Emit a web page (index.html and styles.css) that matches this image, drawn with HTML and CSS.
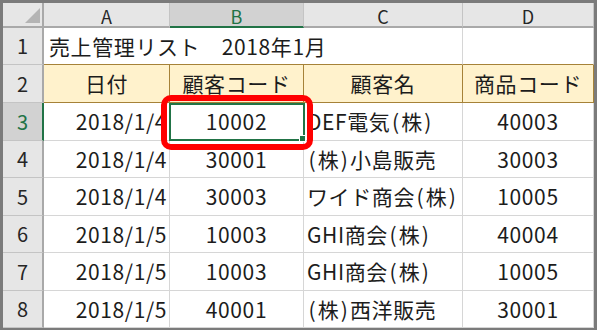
FILE: index.html
```html
<!DOCTYPE html>
<html lang="ja">
<head>
<meta charset="utf-8">
<link rel="stylesheet" href="styles.css">
</head>
<body>
<div class="frame">
  <div class="sheet">
    <div class="hd corner"><span class="tri"></span></div>
    <div class="hd col">A</div>
    <div class="hd col sel">B</div>
    <div class="hd col">C</div>
    <div class="hd col">D</div>

    <div class="rh">1</div>
    <div class="c title">売上管理リスト　2018年1月</div>
    <div class="c r1"></div>

    <div class="rh">2</div>
    <div class="c th">日付</div>
    <div class="c th">顧客コード</div>
    <div class="c th">顧客名</div>
    <div class="c th">商品コード</div>

    <div class="rh rsel">3</div>
    <div class="c date">2018/1/4</div>
    <div class="c num active">10002<span class="selbox"><span class="handle"></span></span><span class="mark"></span></div>
    <div class="c name">DEF電気<span class="p">(</span>株<span class="p">)</span></div>
    <div class="c num">40003</div>

    <div class="rh">4</div>
    <div class="c date">2018/1/4</div>
    <div class="c num">30001</div>
    <div class="c name"><span class="p">(</span>株<span class="p">)</span>小島販売</div>
    <div class="c num">30003</div>

    <div class="rh">5</div>
    <div class="c date">2018/1/4</div>
    <div class="c num">30003</div>
    <div class="c name">ワイド商会<span class="p">(</span>株<span class="p">)</span></div>
    <div class="c num">10005</div>

    <div class="rh">6</div>
    <div class="c date">2018/1/5</div>
    <div class="c num">10003</div>
    <div class="c name">GHI商会<span class="p">(</span>株<span class="p">)</span></div>
    <div class="c num">40004</div>

    <div class="rh">7</div>
    <div class="c date">2018/1/5</div>
    <div class="c num">10003</div>
    <div class="c name">GHI商会<span class="p">(</span>株<span class="p">)</span></div>
    <div class="c num">10005</div>

    <div class="rh">8</div>
    <div class="c date">2018/1/5</div>
    <div class="c num">40001</div>
    <div class="c name"><span class="p">(</span>株<span class="p">)</span>西洋販売</div>
    <div class="c num">30001</div>
  </div>
</div>
</body>
</html>
```
FILE: styles.css
```css
* { box-sizing: border-box; }
html, body { margin: 0; padding: 0; background: #fff; }
.frame {
  width: 597px;
  height: 330px;
  border-style: solid;
  border-color: #7b7b7b;
  border-width: 3px 3px 2px 3px;
  overflow: hidden;
}
.sheet {
  display: grid;
  grid-template-columns: 41px 126px 134px 159px 131px;
  grid-template-rows: 25px 37px 38px 38px 37px 38px 37px 38px 37px;
  font-family: "Noto Sans CJK JP", sans-serif;
  color: #1c1c1c;
}
.hd {
  background: #e6e6e6;
  border-right: 1px solid #c4c4c4;
  border-bottom: 2px solid #a9a9a9;
  display: flex;
  align-items: center;
  justify-content: center;
  font-size: 18px;
  line-height: 1;
  color: #262626;
  padding-top: 3px;
}
.corner { position: relative; border-right: 2px solid #a9a9a9; }
.tri {
  position: absolute;
  right: 2px;
  bottom: 3px;
  width: 0;
  height: 0;
  border-left: 15px solid transparent;
  border-bottom: 15px solid #b4b4b4;
}
.col.sel {
  background: #d2d2d2;
  color: #217346;
  border-bottom: 2px solid #217346;
}
.rh {
  background: #e6e6e6;
  border-right: 2px solid #a9a9a9;
  border-bottom: 1px solid #c4c4c4;
  display: flex;
  align-items: center;
  justify-content: center;
  font-size: 20px;
  line-height: 1;
  color: #262626;
}
.rh.rsel {
  background: #d2d2d2;
  color: #217346;
  border-right: 2px solid #217346;
}
.c {
  border-right: 1px solid #d6d6d6;
  border-bottom: 1px solid #d6d6d6;
  display: flex;
  align-items: center;
  font-size: 21px;
  line-height: 1;
  letter-spacing: 0.6px;
  white-space: nowrap;
}
.p { padding: 0 1.5px; }
.title {
  grid-column: span 3;
  padding-left: 5px;
  border-bottom: 1px solid #a68238;
}
.r1 { border-bottom: 1px solid #a68238; }
.th {
  background: #fff2cc;
  border-right: 1px solid #a68238;
  border-bottom: 1px solid #a68238;
  justify-content: center;
}
.date { justify-content: flex-end; padding-right: 2px; }
.num { justify-content: center; }
.name { padding-left: 3px; }
.active { position: relative; }
.selbox {
  position: absolute;
  left: -1px;
  top: 0;
  width: 136px;
  height: 38px;
  border: 2px solid #217346;
}
.handle {
  position: absolute;
  right: -3px;
  bottom: -3px;
  width: 7px;
  height: 7px;
  background: #217346;
  border: 1px solid #fff;
}
.mark {
  position: absolute;
  left: -9px;
  top: -8px;
  width: 152px;
  height: 55px;
  border: 6px solid #ff0000;
  border-radius: 10px;
}
```
